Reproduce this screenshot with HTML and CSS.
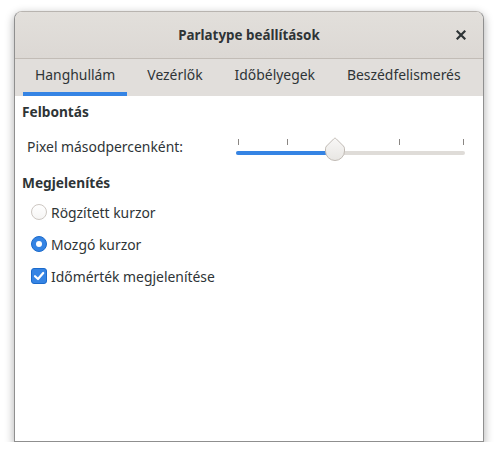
FILE: index.html
```html
<!DOCTYPE html>
<html lang="hu">
<head>
<meta charset="utf-8">
<title>Parlatype beállítások</title>
<link rel="stylesheet" href="styles.css">
</head>
<body>
<div class="window">
  <header class="headerbar">
    <span class="title">Parlatype beállítások</span>
    <button class="close" aria-label="Bezárás">
      <svg width="10" height="10" viewBox="0 0 10 10"><path d="M1.5 1.5 L8.5 8.5 M8.5 1.5 L1.5 8.5" stroke="#2e3436" stroke-width="2.2" stroke-linecap="square"/></svg>
    </button>
  </header>
  <nav class="tabs">
    <div class="tab active">Hanghullám</div>
    <div class="tab">Vezérlők</div>
    <div class="tab">Időbélyegek</div>
    <div class="tab">Beszédfelismerés</div>
  </nav>
  <main class="content">
    <div class="section-title">Felbontás</div>
    <div class="scale-row">
      <span class="scale-label">Pixel másodpercenként:</span>
      <div class="scale">
        <span class="tick" style="left:2px"></span>
        <span class="tick" style="left:51px"></span>
        <span class="tick" style="left:163px"></span>
        <span class="tick" style="left:227px"></span>
        <div class="trough"><div class="fill" style="width:98px"></div></div>
        <svg class="knob" style="left:88px" width="22" height="25" viewBox="0 0 22 25">
          <defs><linearGradient id="kg" x1="0" y1="0" x2="0" y2="1"><stop offset="0" stop-color="#f8f7f6"/><stop offset="1" stop-color="#e8e6e3"/></linearGradient></defs>
          <path d="M11 1.2 Q11.6 1.2 12.2 1.8 L19.4 9 Q20.5 10.1 20.5 11.8 V14 A9.5 9.5 0 0 1 1.5 14 V11.8 Q1.5 10.1 2.6 9 L9.8 1.8 Q10.4 1.2 11 1.2 Z" fill="url(#kg)" stroke="#c0bab4" stroke-width="1"/>
        </svg>
      </div>
    </div>
    <div class="section-title second">Megjelenítés</div>
    <label class="option"><span class="radio"></span>Rögzített kurzor</label>
    <label class="option"><span class="radio checked"></span>Mozgó kurzor</label>
    <label class="option"><span class="check">
      <svg width="12" height="12" viewBox="0 0 12 12"><path d="M2 6.2 L5 9 L10.2 3" fill="none" stroke="#fff" stroke-width="2.2" stroke-linecap="round" stroke-linejoin="round"/></svg>
    </span>Időmérték megjelenítése</label>
  </main>
</div>
</body>
</html>
```
FILE: styles.css
```css
* { box-sizing: border-box; }
html, body {
  margin: 0;
  padding: 0;
  background: #ffffff;
}
body {
  font-family: "Noto Sans", "Open Sans", sans-serif;
  font-size: 14px;
  color: #2e3436;
  padding: 11px 0 0 14px;
}
.window {
  width: 470px;
  height: 431px;
  border: 1px solid #8f8f8f;
  border-top-color: #b8b4b0;
  border-radius: 8px 8px 0 0;
  background: #ffffff;
  box-shadow: 0 3px 9px 1px rgba(0, 0, 0, 0.28);
  display: flex;
  flex-direction: column;
  overflow: hidden;
}
.headerbar {
  height: 47px;
  flex: none;
  background: linear-gradient(#e2dfdb, #dcd8d4);
  border-bottom: 1px solid #c2bcb6;
  display: flex;
  align-items: center;
  justify-content: center;
  position: relative;
}
.title {
  font-weight: bold;
  font-size: 13.4px;
  color: #2e3436;
}
.close {
  position: absolute;
  right: 17px;
  top: 18px;
  width: 10px;
  height: 10px;
  padding: 0;
  border: 0;
  background: none;
  display: flex;
}
.tabs {
  flex: none;
  height: 37px;
  background: #e1dedb;
  display: flex;
  gap: 8px;
  padding: 0 8px;
}
.tab {
  padding: 0 12px;
  display: flex;
  align-items: center;
  font-size: 13.9px;
  color: #2e3436;
  padding-bottom: 2px;
  border-bottom: 4px solid transparent;
}
.tab.active {
  border-bottom-color: #3584e4;
}
.content {
  flex: 1;
  padding: 6px 0 0 7px;
  display: flex;
  flex-direction: column;
}
.section-title {
  font-weight: bold;
  font-size: 13.7px;
  line-height: 20px;
  height: 20px;
}
.section-title.second {
  margin-top: 11px;
}
.scale-row {
  margin-top: 10px;
  height: 30px;
  display: flex;
  align-items: flex-start;
}
.scale-label {
  margin-left: 5px;
  width: 209px;
  line-height: 20px;
  margin-top: 5px;
  font-size: 13.9px;
}
.scale {
  position: relative;
  width: 229px;
  height: 30px;
}
.tick {
  position: absolute;
  top: 7px;
  width: 1px;
  height: 6px;
  background: #8a8683;
}
.trough {
  position: absolute;
  left: 0;
  right: 0;
  top: 19px;
  height: 4px;
  border-radius: 2px;
  background: #dfdcd8;
  overflow: hidden;
}
.fill {
  height: 100%;
  background: #3584e4;
}
.knob {
  position: absolute;
  top: 5px;
}
.option {
  display: flex;
  align-items: center;
  height: 20px;
  font-size: 13.9px;
  margin-top: 9px;
  margin-left: 9px;
}
.option + .option {
  margin-top: 12px;
}
.radio {
  width: 16px;
  height: 16px;
  border-radius: 50%;
  border: 1px solid #cdc7c2;
  background: linear-gradient(#ffffff, #f6f5f4);
  margin-right: 4px;
  flex: none;
  position: relative;
}
.radio.checked {
  background: #3584e4;
  border-color: #1b6acb;
}
.radio.checked::after {
  content: "";
  position: absolute;
  left: 4px;
  top: 4px;
  width: 6px;
  height: 6px;
  border-radius: 50%;
  background: #ffffff;
}
.check {
  width: 16px;
  height: 16px;
  border-radius: 3px;
  background: #3584e4;
  border: 1px solid #1b6acb;
  margin-right: 4px;
  flex: none;
  display: flex;
  align-items: center;
  justify-content: center;
}
```
